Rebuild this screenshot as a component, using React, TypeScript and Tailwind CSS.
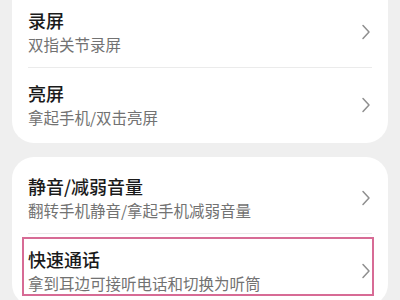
const font = { fontFamily: '"Noto Sans CJK SC", "Noto Sans", sans-serif' };

type Item = { title: string; desc: string; highlight?: boolean };

const groups: Item[][] = [
  [
    { title: "录屏", desc: "双指关节录屏" },
    { title: "亮屏", desc: "拿起手机/双击亮屏" },
  ],
  [
    { title: "静音/减弱音量", desc: "翻转手机静音/拿起手机减弱音量" },
    { title: "快速通话", desc: "拿到耳边可接听电话和切换为听筒", highlight: true },
  ],
];

function Chevron() {
  return (
    <svg width="10" height="16" viewBox="0 0 10 16" fill="none" className="shrink-0">
      <path d="M2 1.5 L8 8 L2 14.5" stroke="#8f8f8f" strokeWidth="1.5" strokeLinecap="round" strokeLinejoin="round" />
    </svg>
  );
}

function Row({ item }: { item: Item }) {
  return (
    <div className="relative flex items-center pl-4 pr-[17px] pt-[13px] pb-[12px]">
      <div className="flex-1 min-w-0">
        <div className="text-[18px] leading-[24px] font-medium text-[#1a1a1a]">{item.title}</div>
        <div className="mt-[1px] text-[15.5px] leading-[22px] text-[#727272]">{item.desc}</div>
      </div>
      <Chevron />
      {item.highlight && (
        <div className="absolute left-[10px] right-[14px] top-[3px] h-[59px] border-2 border-[#d76b95]" />
      )}
    </div>
  );
}

export default function App() {
  return (
    <div className="h-[300px] w-[400px] overflow-hidden bg-[#efefef] px-3" style={font}>
      <div className="-mt-[5px] rounded-b-[22px] bg-white pb-[3px]">
        {groups[0].map((it, i) => (
          <div key={i}>
            {i > 0 && <div className="mx-4 h-px bg-[#ebebeb]" />}
            <Row item={it} />
          </div>
        ))}
      </div>
      <div className="mt-[14px] rounded-[22px] bg-white pt-1">
        {groups[1].map((it, i) => (
          <div key={i}>
            {i > 0 && <div className="mx-4 h-px bg-[#ebebeb]" />}
            <Row item={it} />
          </div>
        ))}
      </div>
    </div>
  );
}
